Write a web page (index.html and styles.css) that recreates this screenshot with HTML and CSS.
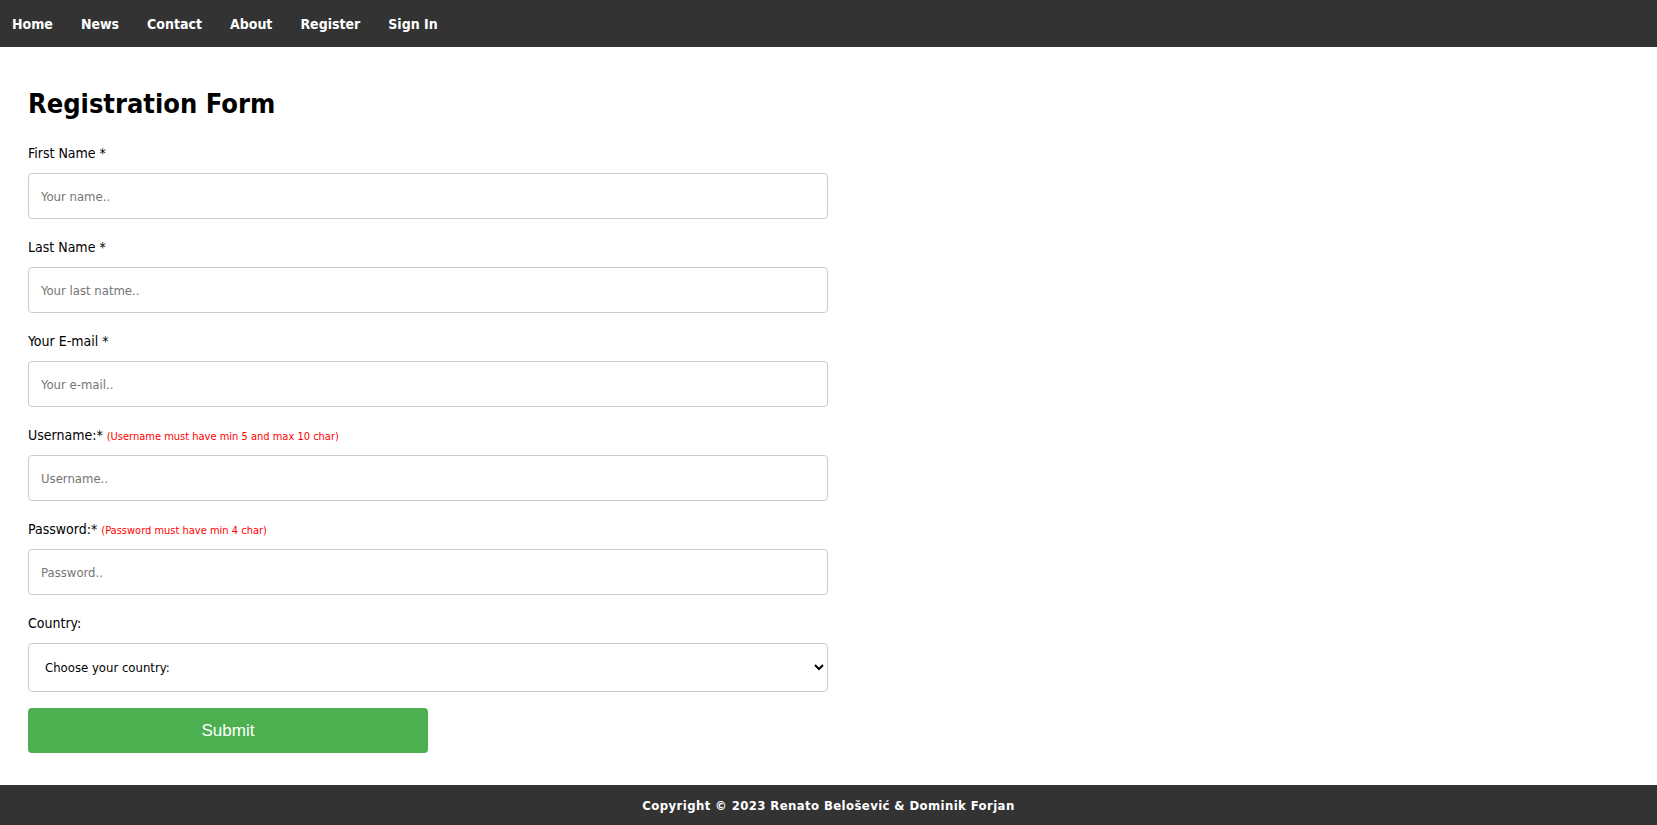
FILE: index.html
```html
<!DOCTYPE html>
<html lang="en">
<head>
<meta charset="utf-8">
<title>Registration Form</title>
<link rel="stylesheet" href="styles.css">
</head>
<body>
<div class="page">
  <nav class="topnav">
    <a href="#">Home</a>
    <a href="#">News</a>
    <a href="#">Contact</a>
    <a href="#">About</a>
    <a href="#">Register</a>
    <a href="#">Sign In</a>
  </nav>
  <main class="content">
    <h1 class="title">Registration Form</h1>
    <form class="form">
      <label class="label" for="fname">First Name *</label>
      <input class="field" id="fname" type="text" placeholder="Your name..">
      <label class="label" for="lname">Last Name *</label>
      <input class="field" id="lname" type="text" placeholder="Your last natme..">
      <label class="label" for="email">Your E-mail *</label>
      <input class="field" id="email" type="text" placeholder="Your e-mail..">
      <label class="label" for="user">Username:* <span class="hint">(Username must have min 5 and max 10 char)</span></label>
      <input class="field" id="user" type="text" placeholder="Username..">
      <label class="label" for="pass">Password:* <span class="hint">(Password must have min 4 char)</span></label>
      <input class="field" id="pass" type="password" placeholder="Password..">
      <label class="label" for="country">Country:</label>
      <select class="field select" id="country">
        <option>Choose your country:</option>
        <option>Croatia</option>
        <option>Slovenia</option>
      </select>
      <button class="submit" type="button">Submit</button>
    </form>
  </main>
  <footer class="footer">Copyright © 2023 Renato Belošević &amp; Dominik Forjan</footer>
</div>
</body>
</html>
```
FILE: styles.css
```css
* { box-sizing: border-box; }
html, body { margin: 0; padding: 0; }
body {
  font-family: "Liberation Sans Narrow", "DejaVu Sans Condensed", "Roboto Condensed", "Liberation Sans", sans-serif;
  font-stretch: condensed;
  color: #000;
  background: #fff;
}
.page {
  min-height: 100vh;
  display: flex;
  flex-direction: column;
}
.topnav {
  background: #333;
  height: 47px;
  display: flex;
  align-items: center;
  gap: 28px;
  padding-left: 12px;
}
.topnav a {
  color: #fff;
  text-decoration: none;
  font-size: 14px;
  font-weight: bold;
}
.content {
  flex: 1;
  padding: 37px 28px 0;
}
.title {
  margin: 0 0 17px;
  font-size: 27px;
  line-height: 40px;
  font-weight: bold;
}
.form {
  width: 800px;
  display: flex;
  flex-direction: column;
  align-items: flex-start;
}
.label {
  display: block;
  height: 24px;
  font-size: 14px;
  line-height: 24px;
}
.hint {
  color: #f00;
  font-size: 11px;
  line-height: 1;
}
.field {
  width: 800px;
  height: 46px;
  margin: 8px 0 16px;
  padding: 12px;
  border: 1px solid #ccc;
  border-radius: 4px;
  font-family: inherit;
  font-stretch: condensed;
  font-size: 13px;
  color: #000;
}
.field::placeholder { color: #757575; }
.select {
  height: 49px;
  background: #fff;
  font-size: 13px;
}
.submit {
  width: 400px;
  height: 45px;
  margin: 0;
  border: none;
  border-radius: 4px;
  background: #4caf50;
  color: #fff;
  font-family: "Liberation Sans", Arial, sans-serif;
  font-size: 17px;
}
.footer {
  margin-top: 32px;
  height: 40px;
  background: #333;
  color: #fff;
  display: flex;
  align-items: center;
  justify-content: center;
  font-size: 13px;
  font-weight: bold;
  letter-spacing: 0.4px;
}
```
